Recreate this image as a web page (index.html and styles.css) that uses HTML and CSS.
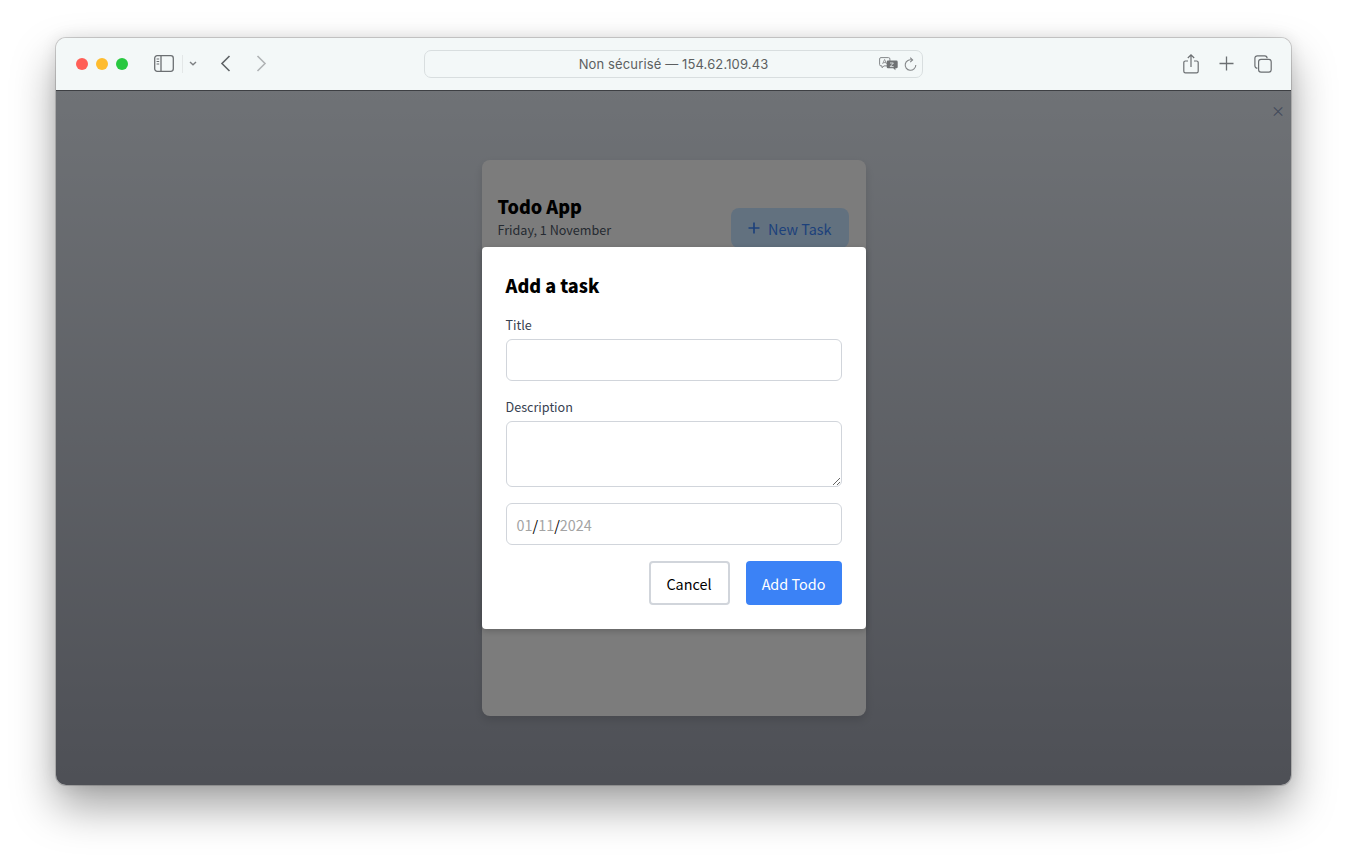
FILE: index.html
```html
<!DOCTYPE html>
<html lang="en">
<head>
    <meta charset="UTF-8">
    <title>Todo App</title>
    <link rel="stylesheet" href="styles.css">
</head>
<body>
    <div class="window">
        <div class="toolbar">
            <div class="toolbar-left">
                <span class="light red"></span>
                <span class="light yellow"></span>
                <span class="light green"></span>
                <svg class="icon-sidebar" width="20" height="17" viewBox="0 0 20 17" fill="none" stroke="#6b6f72" stroke-width="1.3">
                    <rect x="0.7" y="0.7" width="18.6" height="15.6" rx="2.5"/>
                    <path d="M7 1v15"/>
                    <path d="M2.6 4h2.6M2.6 6.5h2.6M2.6 9h2.6" stroke-width="1"/>
                </svg>
                <span class="divider"></span>
                <svg class="icon-chevron" width="8" height="5" viewBox="0 0 8 5" fill="none" stroke="#7d8083" stroke-width="1.4">
                    <path d="M1 1l3 2.8L7 1"/>
                </svg>
                <svg class="icon-back" width="11" height="17" viewBox="0 0 11 17" fill="none" stroke="#5f6366" stroke-width="1.6">
                    <path d="M9.5 1L2 8.5 9.5 16"/>
                </svg>
                <svg class="icon-forward" width="11" height="17" viewBox="0 0 11 17" fill="none" stroke="#b0b3b5" stroke-width="1.6">
                    <path d="M1.5 1L9 8.5 1.5 16"/>
                </svg>
            </div>
            <div class="address">
                <span class="address-text">Non sécurisé — 154.62.109.43</span>
                <svg class="icon-translate" width="19" height="14" viewBox="0 0 19 14">
                    <path d="M2 0.6h7.5a1.4 1.4 0 0 1 1.4 1.4v5.5a1.4 1.4 0 0 1-1.4 1.4H5l-2 1.8V8.9H2A1.4 1.4 0 0 1 0.6 7.5V2A1.4 1.4 0 0 1 2 0.6z" fill="#f3f8f8" stroke="#85888a" stroke-width="1"/>
                    <path d="M3.6 7l2-4.6 2 4.6M4.4 5.6h2.6" fill="none" stroke="#85888a" stroke-width="0.8"/>
                    <path d="M9 3.6h8.4a1.3 1.3 0 0 1 1.3 1.3v5a1.3 1.3 0 0 1-1.3 1.3h-1v2l-2.2-2H9a1.3 1.3 0 0 1-1.3-1.3v-5A1.3 1.3 0 0 1 9 3.6z" fill="#6f7274"/>
                    <path d="M11 6h3.4l-3.2 3.6h3.4" fill="none" stroke="#f3f8f8" stroke-width="0.8"/>
                </svg>
                <svg class="icon-reload" width="13" height="15" viewBox="0 0 13 15" fill="none" stroke="#85888a" stroke-width="1.1">
                    <path d="M8.2 3A5.3 5.3 0 1 0 11.8 8"/>
                    <path d="M6.2 0.6L8.6 3 6.2 5.2"/>
                </svg>
            </div>
            <div class="toolbar-right">
                <svg width="16" height="20" viewBox="0 0 16 20" fill="none" stroke="#6b6f72" stroke-width="1.2">
                    <path d="M5 7H2.4A1.6 1.6 0 0 0 0.8 8.6v8.6a1.6 1.6 0 0 0 1.6 1.6h11.2a1.6 1.6 0 0 0 1.6-1.6V8.6A1.6 1.6 0 0 0 13.6 7H11"/>
                    <path d="M8 13V1M4.8 4L8 0.9 11.2 4"/>
                </svg>
                <svg width="15" height="15" viewBox="0 0 15 15" fill="none" stroke="#6b6f72" stroke-width="1.3">
                    <path d="M7.5 0.5v14M0.5 7.5h14"/>
                </svg>
                <svg width="18" height="18" viewBox="0 0 18 18" fill="none" stroke="#6b6f72" stroke-width="1.2">
                    <path d="M3.4 13.2A2.4 2.4 0 0 1 0.9 10.8V3.2A2.4 2.4 0 0 1 3.3 0.8h7.4a2.4 2.4 0 0 1 2.4 2.4"/>
                    <rect x="4.6" y="4.4" width="12.6" height="12.8" rx="2.4"/>
                </svg>
            </div>
        </div>

        <div class="page">
            <div class="card">
                <div class="card-header">
                    <div>
                        <h1 class="app-title">Todo App</h1>
                        <p class="app-date">Friday, 1 November</p>
                    </div>
                    <button class="new-task" type="button">
                        <svg width="12" height="12" viewBox="0 0 12 12" fill="none" stroke="currentColor" stroke-width="1.7">
                            <path d="M6 0.5v11M0.5 6h11"/>
                        </svg>
                        New Task
                    </button>
                </div>
            </div>

            <div class="overlay">
                <span class="dismiss">×</span>
                <form class="modal">
                    <h2 class="modal-title">Add a task</h2>
                    <label class="field-label">Title</label>
                    <input class="field field-input" type="text">
                    <label class="field-label">Description</label>
                    <textarea class="field field-area"></textarea>
                    <div class="field field-input date">
                        <span>01</span><span class="date-sep">/</span><span>11</span><span class="date-sep">/</span><span>2024</span>
                    </div>
                    <div class="actions">
                        <button class="btn btn-cancel" type="button">Cancel</button>
                        <button class="btn btn-add" type="button">Add Todo</button>
                    </div>
                </form>
            </div>
        </div>
    </div>
</body>
</html>
```

FILE: styles.css
```css
* {
    box-sizing: border-box;
}
html, body {
    height: 100%;
}
body {
    margin: 0;
    padding: 38px 56px 74px;
    background-color: #fff;
    font-family: "Noto Sans CJK SC", "Noto Sans", sans-serif;
    overflow: hidden;
}
.window {
    height: 747px;
    display: flex;
    flex-direction: column;
    border-radius: 10px;
    overflow: hidden;
    box-shadow: 0 0 0 1px rgba(0, 0, 0, 0.16), 0 22px 44px rgba(0, 0, 0, 0.36), 0 0 16px rgba(0, 0, 0, 0.1);
}

/* browser toolbar */
.toolbar {
    height: 53px;
    flex-shrink: 0;
    display: grid;
    grid-template-columns: 1fr 499px 1fr;
    align-items: center;
    padding-bottom: 1px;
    background-color: #f3f8f8;
    border-bottom: 1px solid #3d3f43;
    font-family: Inter, sans-serif;
}
.toolbar-left {
    display: flex;
    align-items: center;
    padding-left: 20px;
}
.light {
    width: 12px;
    height: 12px;
    border-radius: 50%;
    margin-right: 8px;
}
.red {
    background-color: #ff5f57;
}
.yellow {
    background-color: #febc2e;
}
.green {
    background-color: #28c840;
}
.icon-sidebar {
    margin-left: 18px;
}
.divider {
    width: 1px;
    height: 18px;
    margin-left: 8px;
    background-color: #e3e7e7;
}
.icon-chevron {
    margin-left: 6px;
}
.icon-back {
    margin-left: 23px;
}
.icon-forward {
    margin-left: 25px;
}
.address {
    height: 28px;
    display: flex;
    align-items: center;
    justify-content: center;
    position: relative;
    border: 1px solid #d8dedf;
    border-radius: 7px;
}
.address-text {
    font-size: 13px;
    letter-spacing: 0.01em;
    color: #5c5f61;
}
.icon-translate {
    position: absolute;
    right: 24px;
    top: 6px;
}
.icon-reload {
    position: absolute;
    right: 5px;
    top: 6px;
}
.toolbar-right {
    display: flex;
    align-items: center;
    justify-content: flex-end;
    gap: 20px;
    padding-right: 19px;
}

/* app behind the dialog */
.page {
    flex: 1;
    position: relative;
    display: flex;
    justify-content: center;
    align-items: flex-start;
    padding-top: 69px;
    background: linear-gradient(to bottom, #dee4ec, #9ca0ac);
}
.card {
    width: 384px;
    height: 556px;
    background-color: #f9f9f9;
    border-radius: 8px;
    box-shadow: 0 4px 8px rgba(0, 0, 0, 0.12);
}
.card-header {
    display: flex;
    justify-content: space-between;
    padding: 32px 17px 0 16px;
}
.app-title {
    margin: 0;
    font-size: 18px;
    line-height: 28px;
    font-weight: 900;
    color: #000;
}
.app-date {
    margin: 0;
    font-size: 12.6px;
    line-height: 20px;
    color: #4b5563;
}
.new-task {
    height: 40px;
    margin-top: 16px;
    padding: 0 17px;
    display: flex;
    align-items: center;
    gap: 8px;
    border: none;
    border-radius: 8px;
    background-color: #c4e2ff;
    color: #3b82f6;
    font-family: inherit;
    font-size: 14.4px;
}

/* dialog */
.overlay {
    position: absolute;
    inset: 0;
    display: flex;
    justify-content: center;
    align-items: flex-start;
    padding-top: 156px;
    background-color: rgba(0, 0, 0, 0.5);
}
.dismiss {
    position: absolute;
    top: 10px;
    right: 6px;
    font-size: 14px;
    line-height: 18px;
    color: #414a5a;
}
.modal {
    width: 384px;
    padding: 24px;
    display: flex;
    flex-direction: column;
    background-color: #fff;
    border-radius: 4px;
    box-shadow: 0 2px 6px rgba(0, 0, 0, 0.2);
}
.modal-title {
    margin: 0 0 16px;
    font-size: 18px;
    line-height: 28px;
    font-weight: 900;
    color: #000;
}
.field-label {
    margin-bottom: 4px;
    font-size: 12.6px;
    line-height: 20px;
    color: #374151;
}
.field {
    display: block;
    width: 100%;
    margin: 0 0 16px;
    padding: 8px 10px;
    border: 1px solid #d1d5db;
    border-radius: 6px;
    background-color: #fff;
    font-family: inherit;
    font-size: 14.4px;
}
.field-input {
    height: 42px;
}
.field-area {
    height: 66px;
}
.date {
    display: flex;
    align-items: center;
    color: #a3a3a3;
}
.date-sep {
    color: #000;
}
.actions {
    display: flex;
    justify-content: flex-end;
    gap: 16px;
}
.btn {
    height: 44px;
    border-radius: 4px;
    font-family: inherit;
    font-size: 14.4px;
}
.btn-cancel {
    width: 81px;
    background-color: #fff;
    border: 2px solid #d1d5db;
    color: #000;
}
.btn-add {
    width: 96px;
    background-color: #3b82f6;
    border: none;
    color: #fff;
}
```
